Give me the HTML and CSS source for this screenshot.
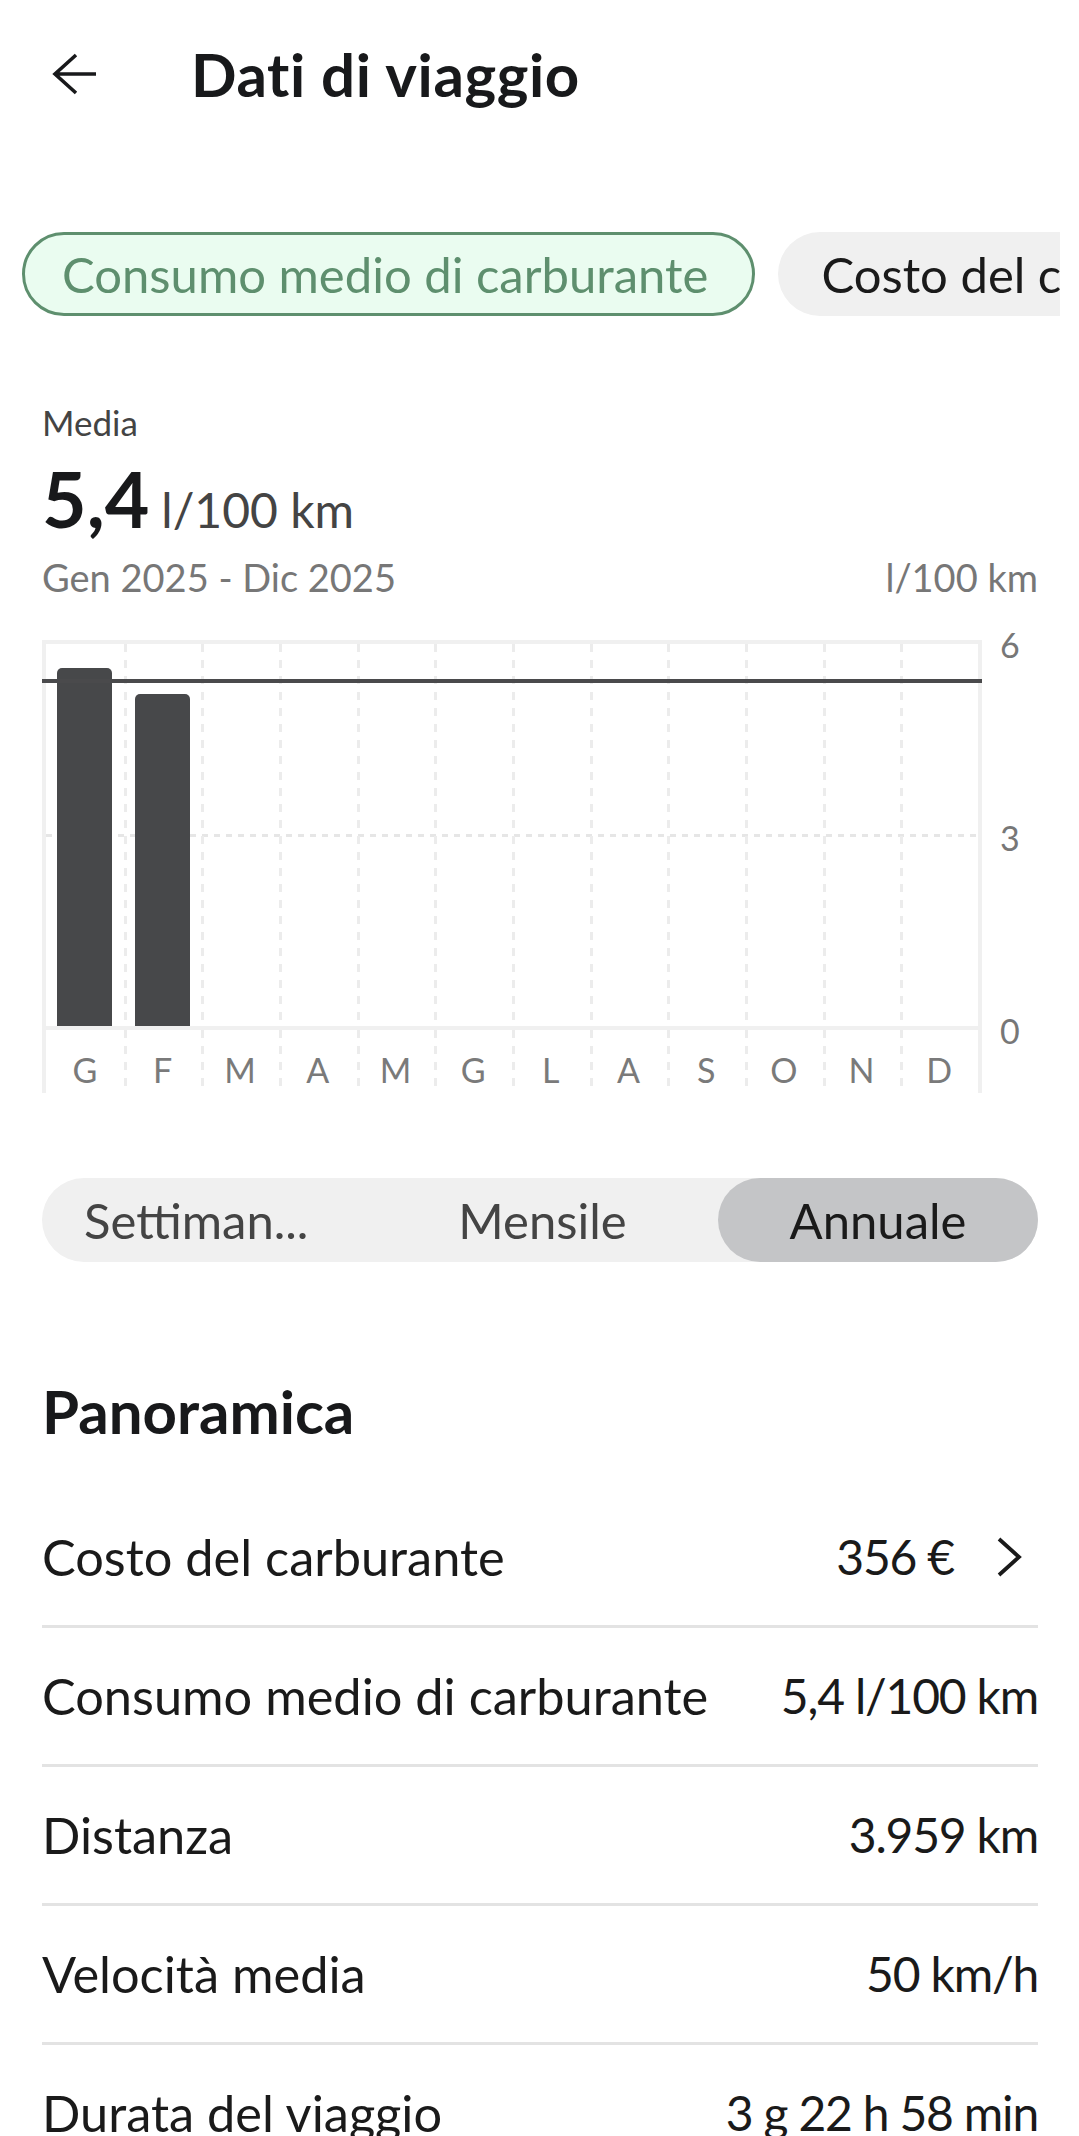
FILE: index.html
```html
<!DOCTYPE html>
<html lang="it">
<head>
  <meta charset="UTF-8" />
  <meta name="viewport" content="width=device-width, initial-scale=1.0" />
  <title>Dati di viaggio</title>
  <link rel="stylesheet" href="styles.css">
</head>
<body>
  <header class="topbar">
    <svg class="back" width="46" height="46" viewBox="0 0 46 46" aria-label="Indietro">
      <path d="M25 4 L4 23 L25 42 M4 23 H45" fill="none" stroke="#18191b" stroke-width="3.6" />
    </svg>
    <h1 class="title">Dati di viaggio</h1>
  </header>

  <div class="chips">
    <button class="chip chip-active">Consumo medio di carburante</button>
    <button class="chip">Costo del carburante</button>
    <button class="chip">Distanza</button>
  </div>

  <main class="content">
    <section class="summary">
      <div class="label">Media</div>
      <div class="big">
        <span class="big-num">5,4</span>
        <span class="big-unit">l/100 km</span>
      </div>
      <div class="range">
        <span>Gen 2025 - Dic 2025</span>
        <span>l/100 km</span>
      </div>
    </section>

    <section class="chart">
      <div class="plot">
        <div class="mid-line"></div>
        <div class="col"><div class="bar" style="height: 358px"></div></div>
        <div class="col"><div class="bar" style="height: 332px"></div></div>
        <div class="col"></div>
        <div class="col"></div>
        <div class="col"></div>
        <div class="col"></div>
        <div class="col"></div>
        <div class="col"></div>
        <div class="col"></div>
        <div class="col"></div>
        <div class="col"></div>
        <div class="col"></div>
        <div class="avg-line" style="bottom: 343px"></div>
      </div>
      <div class="yaxis">
        <span>6</span>
        <span>3</span>
        <span>0</span>
      </div>
      <div class="months">
        <span>G</span><span>F</span><span>M</span><span>A</span>
        <span>M</span><span>G</span><span>L</span><span>A</span>
        <span>S</span><span>O</span><span>N</span><span>D</span>
      </div>
    </section>

    <div class="segmented">
      <div class="seg seg-first">Settiman...</div>
      <div class="seg">Mensile</div>
      <div class="seg seg-active">Annuale</div>
    </div>

    <h2 class="section-title">Panoramica</h2>

    <ul class="overview">
      <li class="row">
        <span>Costo del carburante</span>
        <span class="value">356 €
          <svg class="chevron" width="30" height="42" viewBox="0 0 30 42">
            <path d="M5 3 L25 21 L5 39" fill="none" stroke="#1a1a1a" stroke-width="3.8" />
          </svg>
        </span>
      </li>
      <li class="row">
        <span>Consumo medio di carburante</span>
        <span class="value">5,4 l/100 km</span>
      </li>
      <li class="row">
        <span>Distanza</span>
        <span class="value">3.959 km</span>
      </li>
      <li class="row">
        <span>Velocità media</span>
        <span class="value">50 km/h</span>
      </li>
      <li class="row">
        <span>Durata del viaggio</span>
        <span class="value">3 g 22 h 58 min</span>
      </li>
    </ul>
  </main>
</body>
</html>
```

FILE: styles.css
```css
* {
  box-sizing: border-box;
}
body {
  margin: 0;
  font-family: Lato, "Open Sans", sans-serif;
  background: #fff;
  color: #1a1a1a;
  overflow: hidden;
}

/* top bar */
.topbar {
  display: flex;
  align-items: center;
  height: 148px;
  padding-left: 51px;
}
.title {
  margin: 0 0 0 94px;
  font-size: 60px;
  letter-spacing: 0.6px;
  font-weight: 700;
  color: #18191b;
}

/* filter chips */
.chips {
  display: flex;
  gap: 23px;
  margin: 84px 19px 0 0;
  padding-left: 22px;
  overflow: hidden;
}
.chip {
  flex: none;
  height: 84px;
  padding: 0 40px;
  border: 3px solid transparent;
  border-radius: 42px;
  background: #f0f0f0;
  font-family: inherit;
  font-size: 49px;
  color: #1a1a1a;
}
.chip-active {
  padding: 0 44px 0 37px;
  border-color: #5e8f6e;
  background: #eafcf0;
  color: #5e8f6e;
}

.content {
  padding: 0 41px 0 42px;
}

/* summary */
.summary {
  margin-top: 86px;
}
.label {
  font-size: 35px;
  line-height: 40px;
  color: #444;
}
.big {
  display: flex;
  align-items: baseline;
  gap: 12px;
  margin-top: 11px;
  line-height: 90px;
}
.big-num {
  font-size: 77px;
  font-weight: 700;
  color: #18191b;
}
.big-unit {
  font-size: 48px;
  color: #444;
}
.range {
  display: flex;
  justify-content: space-between;
  margin-top: 0;
  font-size: 38px;
  line-height: 44px;
  color: #777;
}

/* chart */
.chart {
  display: grid;
  grid-template-columns: 940px 1fr;
  margin-top: 41px;
}
.plot {
  position: relative;
  display: grid;
  grid-template-columns: repeat(12, 1fr);
  height: 390px;
  border: 4px solid #f0f0f0;
}
.col {
  position: relative;
  display: flex;
  align-items: flex-end;
  justify-content: center;
}
.col + .col,
.months span + span {
  background: linear-gradient(#ececec 50%, transparent 50%) left top / 3px 16px repeat-y;
}
.bar {
  width: 55px;
  background: #47484a;
  border-radius: 5px 5px 0 0;
  z-index: 1;
}
.mid-line {
  position: absolute;
  left: 0;
  right: 0;
  bottom: 189px;
  height: 3px;
  background: linear-gradient(to right, #e6e6e6 50%, transparent 50%) left top / 12px 3px repeat-x;
}
.avg-line {
  position: absolute;
  left: -4px;
  right: -4px;
  height: 4px;
  background: #4a4a4c;
  z-index: 2;
}
.yaxis {
  grid-column: 2;
  grid-row: 1 / 3;
  display: flex;
  flex-direction: column;
  justify-content: space-between;
  height: 406px;
  margin-top: -5px;
  padding-left: 18px;
  font-size: 34px;
  line-height: 20px;
  color: #777;
}
.months {
  display: grid;
  grid-template-columns: repeat(12, 1fr);
  height: 63px;
  border-left: 4px solid #f0f0f0;
  border-right: 4px solid #f0f0f0;
}
.months span {
  padding-top: 20px;
  text-align: center;
  font-size: 34px;
  line-height: 40px;
  color: #7a7a7a;
}

/* period switch */
.segmented {
  display: grid;
  grid-template-columns: 325px 1fr 320px;
  height: 84px;
  margin-top: 85px;
  border-radius: 42px;
  background: #f0f0f0;
}
.seg {
  display: flex;
  align-items: center;
  justify-content: center;
  font-size: 49px;
  color: #444;
}
.seg-first {
  justify-content: flex-start;
  padding-left: 42px;
}
.seg-active {
  border-radius: 42px;
  background: #c4c5c7;
  color: #1a1a1a;
}

/* overview */
.section-title {
  margin: 113px 0 42px;
  font-size: 60px;
  line-height: 72px;
  font-weight: 700;
  color: #18191b;
}
.overview {
  margin: 0;
  padding: 0;
  list-style: none;
}
.row {
  display: flex;
  align-items: center;
  justify-content: space-between;
  height: 139px;
  border-bottom: 3px solid #e3e3e3;
  font-size: 50.5px;
  line-height: 60px;
}
.value {
  display: flex;
  align-items: center;
  font-size: 48px;
  letter-spacing: -1.2px;
}
.chevron {
  margin-left: 40px;
  margin-right: 14px;
}
```
